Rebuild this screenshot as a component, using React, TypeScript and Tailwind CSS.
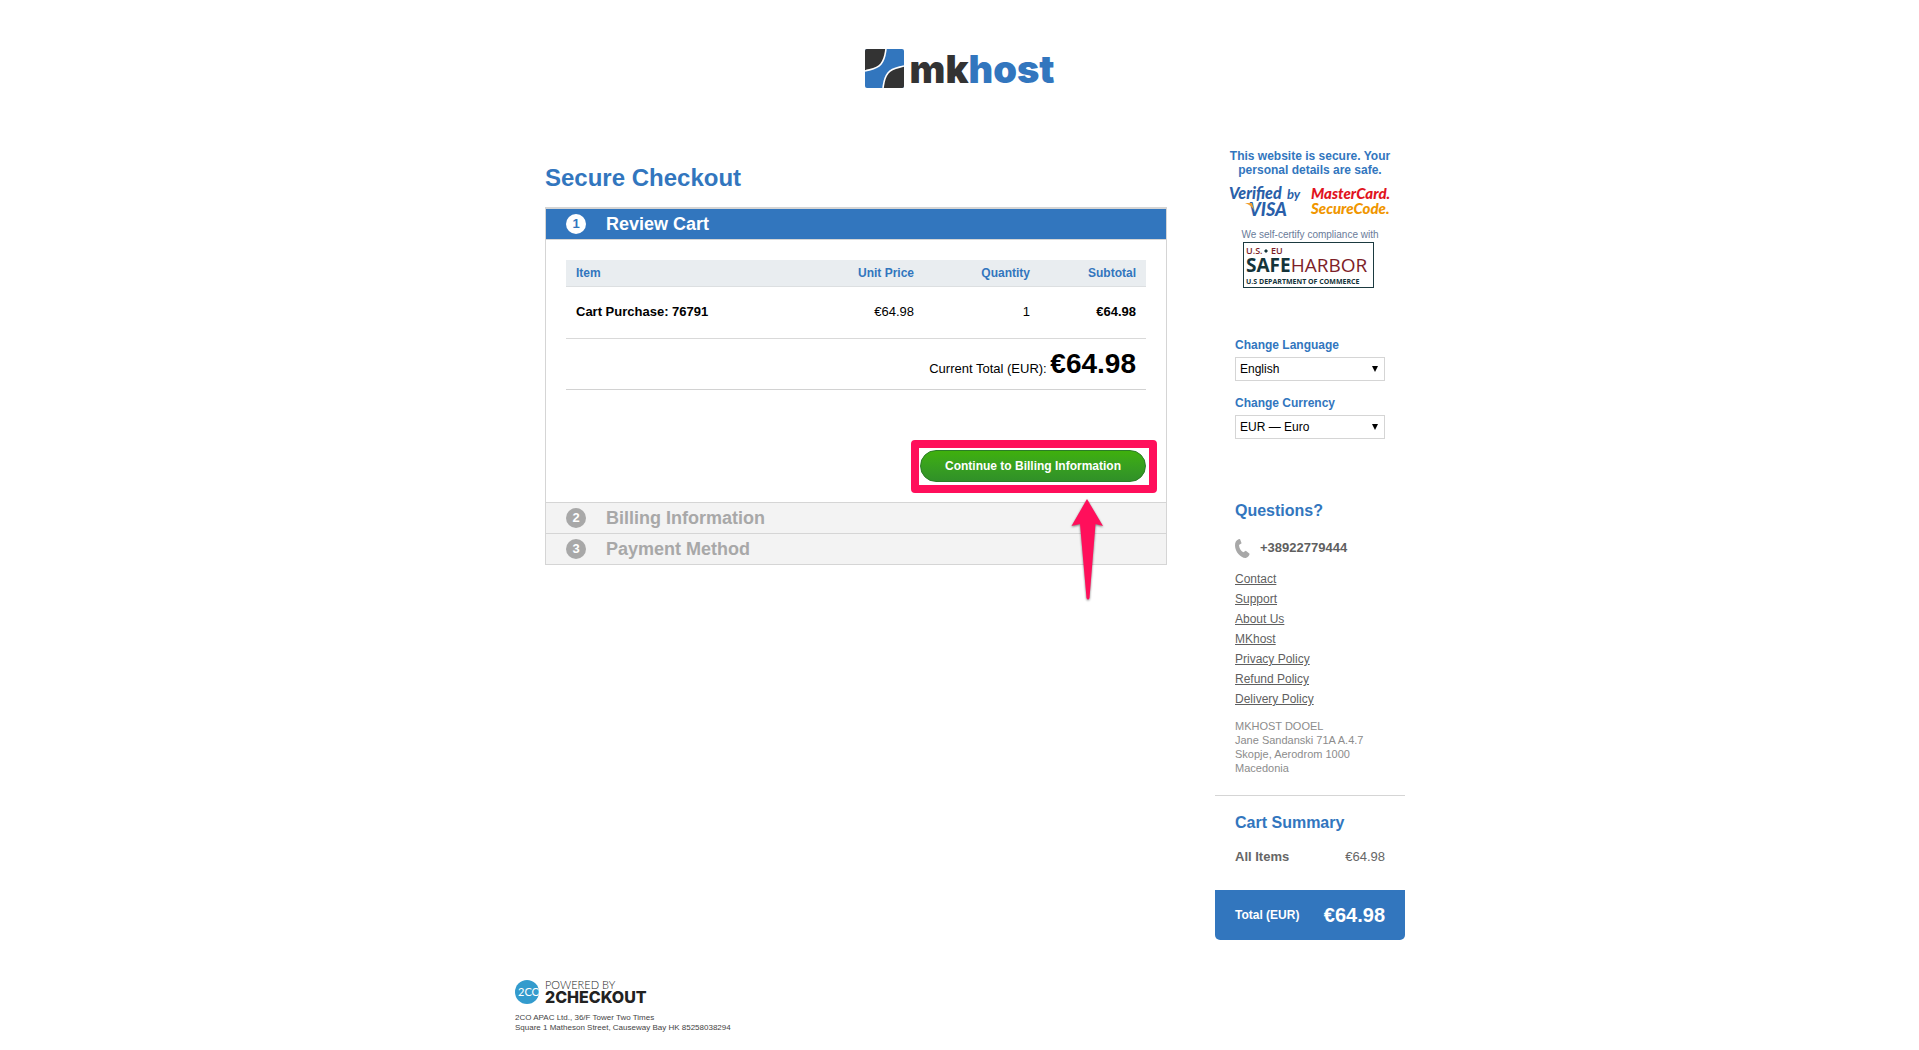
import React, { useState } from 'react';

interface CartItem {
  name: string;
  price: string;
  quantity: number;
}

const items: CartItem[] = [{ name: 'Cart Purchase: 76791', price: '€64.98', quantity: 1 }];

const total = '€64.98';

const links = ['Contact', 'Support', 'About Us', 'MKhost', 'Privacy Policy', 'Refund Policy', 'Delivery Policy'];

const Logo: React.FC = () => (
  <a href="#" className="flex items-center gap-[6px]">
    <svg width="39" height="39" viewBox="0 0 39 39" aria-hidden="true">
      <rect width="39" height="39" rx="2" fill="#3276be" />
      <path d="M2 0H21C20 6 20 10 16 15C12 20 7 20 0 22V2Q0 0 2 0Z" fill="#333" />
      <path d="M39 17V37Q39 39 37 39H18C19 33 19 29 23 24C27 19 32 19 39 17Z" fill="#333" />
      <path d="M21 0C20 6 20 10 16 15C12 20 7 20 0 22" fill="none" stroke="#fff" strokeWidth="1.600" />
      <path d="M18 39C19 33 19 29 23 24C27 19 32 19 39 17" fill="none" stroke="#fff" strokeWidth="1.600" />
    </svg>
    <span className="font-['Inter',sans-serif] text-[38px] leading-9 font-black text-[#333]">
      mk<span className="text-[#3276be]">host</span>
    </span>
  </a>
);

const StepHeader: React.FC<{ step: number; title: string; active?: boolean }> = ({ step, title, active }) => (
  <h2
    className={`flex h-[30px] items-center gap-5 pl-5 text-lg leading-5 font-bold ${
      active ? 'bg-[#3276be] text-white' : 'bg-[#f3f3f3] text-[#a8a8a8]'
    }`}
  >
    <span
      className={`flex size-5 items-center justify-center rounded-full text-[13px] ${
        active ? 'bg-white text-[#3276be]' : 'bg-[#a8a8a8] text-white'
      }`}
    >
      {step}
    </span>
    {title}
  </h2>
);

const CartTable: React.FC = () => (
  <table className="w-full text-[13px] leading-4">
    <thead>
      <tr className="h-[26px] border-b border-[#dcdfe1] bg-[#e9edf0] text-xs text-[#3276be]">
        <th className="pl-[10px] text-left">Item</th>
        <th className="w-[120px] text-right">Unit Price</th>
        <th className="w-[116px] text-right">Quantity</th>
        <th className="w-[116px] pr-[10px] text-right">Subtotal</th>
      </tr>
    </thead>
    <tbody>
      {items.map((item) => (
        <tr key={item.name} className="h-[52px] border-b border-[#d9d9d9]">
          <td className="pl-[10px] font-bold">{item.name}</td>
          <td className="text-right">{item.price}</td>
          <td className="text-right">{item.quantity}</td>
          <td className="pr-[10px] text-right font-bold">{item.price}</td>
        </tr>
      ))}
    </tbody>
    <tfoot>
      <tr className="h-[51px] border-b border-[#d2d2d2]">
        <td colSpan={4} className="pr-[10px] text-right">
          Current Total (EUR): <strong className="text-[28px] leading-8">{total}</strong>
        </td>
      </tr>
    </tfoot>
  </table>
);

const Highlight: React.FC = () => (
  <>
    <span className="pointer-events-none absolute -top-[10px] -right-[11px] -bottom-[11px] -left-[9px] rounded-[4px] border-8 border-[#ff0f5b]" />
    <svg
      className="pointer-events-none absolute top-[49px] right-[42px] z-10 drop-shadow-[0_1px_1px_rgba(0,0,0,0.5)]"
      width="33"
      height="102"
      viewBox="0 0 33 102"
      aria-hidden="true"
    >
      <path d="M16 0L32 27L24.500 25L18.500 99Q17 102 15.500 99L9 25L0.500 27Z" fill="#ff0f5b" />
    </svg>
  </>
);

const SelectBox: React.FC<{ id: string; label: string; options: string[] }> = ({ id, label, options }) => {
  const [value, setValue] = useState<string>(options[0]);

  return (
    <div>
      <label htmlFor={id} className="block text-xs leading-[14px] font-bold text-[#3276be]">
        {label}
      </label>
      <div className="relative mt-[5px]">
        <select
          id={id}
          value={value}
          onChange={(e) => setValue(e.target.value)}
          className="block h-6 w-full appearance-none border border-[#d5d5d5] bg-white pl-1 text-[12px] leading-4 text-black"
        >
          {options.map((option) => (
            <option key={option}>{option}</option>
          ))}
        </select>
        <svg className="pointer-events-none absolute top-[9px] right-[7px]" width="6" height="6" viewBox="0 0 6 6" aria-hidden="true">
          <path d="M0 0H6L3 6Z" />
        </svg>
      </div>
    </div>
  );
};

const SecurityBadges: React.FC = () => (
  <div className="flex flex-col items-center text-center">
    <p className="text-xs leading-[14px] font-bold text-[#3276be]">
      This website is secure. Your
      <br />
      personal details are safe.
    </p>
    <div className="mt-[9px] flex gap-[7px]">
      <svg width="75" height="33" viewBox="0 0 75 33" className="overflow-visible font-['Lato',sans-serif] italic" fill="#2a5fa9">
        <text x="0" y="13" fontSize="16" fontWeight="900">Verified</text>
        <text x="58" y="13" fontSize="13" fontWeight="700">by</text>
        <text x="20" y="30" fontSize="18" fontWeight="900">VISA</text>
        <path d="M16 17H23L25 24Q22 19 16 17Z" fill="#f0a030" />
      </svg>
      <svg width="80" height="33" viewBox="0 0 80 33" className="overflow-visible font-['Lato',sans-serif] italic">
        <text x="0" y="13" fontSize="15" fontWeight="900" fill="#e1141e">MasterCard.</text>
        <text x="0" y="28" fontSize="15" fontWeight="900" fill="#f09600">SecureCode.</text>
      </svg>
    </div>
    <p className="mt-[10px] text-[10px] leading-3 text-[#6a7b99]">We self-certify compliance with</p>
    <svg width="135" height="46" viewBox="0 0 135 46" className="mt-px font-['Open_Sans',sans-serif]">
      <rect x="0.500" y="0.500" width="130" height="45" fill="#fff" stroke="#1b3a40" />
      <text x="3" y="12" fontSize="9" fontWeight="600" fill="#7d1e28">U.S.</text>
      <path d="M23 7L25 9L23 11L21 9Z" fill="#14343a" />
      <text x="28" y="12" fontSize="9" fontWeight="600" fill="#7d1e28">EU</text>
      <text x="3" y="30" fontSize="19" fontWeight="700" fill="#14343a">
        SAFE<tspan fontWeight="400" fill="#7d1e28">HARBOR</tspan>
      </text>
      <text x="3" y="42" fontSize="7" fontWeight="700" fill="#14343a">U.S DEPARTMENT OF COMMERCE</text>
    </svg>
  </div>
);

const Sidebar: React.FC = () => (
  <aside className="w-[190px] shrink-0">
    <SecurityBadges />

    <form className="mt-[50px] flex flex-col gap-[15px] px-5">
      <SelectBox id="language" label="Change Language" options={['English', 'Deutsch', 'Français']} />
      <SelectBox id="currency" label="Change Currency" options={['EUR — Euro', 'USD — U.S. Dollar']} />
    </form>

    <section className="mt-[63px] border-b border-[#d5d5d5] px-5 pb-5 text-[#5f5f5f]">
      <h3 className="text-base leading-[18px] font-bold text-[#3276be]">Questions?</h3>
      <p className="mt-[19px] flex h-[19px] gap-[10px] text-[13px] leading-[18px] font-bold">
        <svg width="15" height="19" viewBox="0 0 15 19" fill="#a8a8a8" aria-hidden="true">
          <path d="M3.500 0.300L5 0L6.600 4.200L4 5.900C4.200 9 5.600 11.500 8.300 13.300L10.800 11.700L14.600 14.800C14.500 16.500 13 18.600 10.800 19C6 19.200 0 13 0 6.500C0 3.300 1.200 1.200 3.500 0.300Z" />
        </svg>
        +38922779444
      </p>
      <ul className="mt-[11px] text-xs leading-5">
        {links.map((link) => (
          <li key={link}>
            <a href="#" className="underline">
              {link}
            </a>
          </li>
        ))}
      </ul>
      <address className="mt-[10px] text-[11px] leading-[14px] text-[#8c8c8c] not-italic">
        MKHOST DOOEL
        <br />
        Jane Sandanski 71A A.4.7
        <br />
        Skopje, Aerodrom 1000
        <br />
        Macedonia
      </address>
    </section>

    <section>
      <h3 className="mt-[18px] px-5 text-base leading-[18px] font-bold text-[#3276be]">Cart Summary</h3>
      <p className="mt-[17px] flex justify-between px-5 text-[13px] leading-4 text-[#666]">
        <strong>All Items</strong>
        <span>{total}</span>
      </p>
      <p className="mt-[25px] flex h-[50px] items-center justify-between rounded-b-[5px] bg-[#3276be] px-5 font-bold text-white">
        <span className="text-xs">Total (EUR)</span>
        <span className="text-xl">{total}</span>
      </p>
    </section>
  </aside>
);

const Footer: React.FC = () => (
  <footer className="mt-10 pl-px">
    <div className="flex items-center gap-[6px] font-['Lato',sans-serif]">
      <span className="flex size-6 items-center overflow-hidden rounded-full bg-[#339bcd] pl-[3px] text-[11px] leading-6 whitespace-nowrap text-white">
        2CO
      </span>
      <span className="text-[#222]">
        <span className="block text-[11px] leading-[10px] font-light">POWERED BY</span>
        <span className="block font-['Inter',sans-serif] text-[16px] leading-[14px] font-extrabold">2CHECKOUT</span>
      </span>
    </div>
    <p className="mt-[9px] text-[8px] leading-[10px] text-[#444]">
      2CO APAC Ltd., 36/F Tower Two Times
      <br />
      Square 1 Matheson Street, Causeway Bay HK 85258038294
    </p>
  </footer>
);

const App: React.FC = () => {
  return (
    <div className="min-h-screen bg-white font-['Liberation_Sans',Arial,sans-serif] text-black">
      <header className="flex justify-center pt-[49px]">
        <Logo />
      </header>

      <div className="mx-auto mt-[61px] max-w-[891px]">
        <div className="flex items-start gap-12 pl-[31px]">
          <main className="flex-1 pt-[15px]">
            <h1 className="text-2xl leading-7 font-bold text-[#3276be]">Secure Checkout</h1>
            <div className="mt-[15px] border border-t-2 border-[#d5d5d5]">
              <StepHeader step={1} title="Review Cart" active />
              <div className="border-y border-[#d5d5d5] p-5">
                <CartTable />
                <div className="mt-[60px] flex justify-end">
                  <div className="relative">
                    <button
                      type="button"
                      className="block h-8 rounded-full border border-[#2b7d26] bg-linear-to-b from-[#3fb00b] to-[#309028] px-6 text-xs font-bold text-white"
                    >
                      Continue to Billing Information
                    </button>
                    <Highlight />
                  </div>
                </div>
              </div>
              <StepHeader step={2} title="Billing Information" />
              <div className="border-t border-[#d5d5d5]">
                <StepHeader step={3} title="Payment Method" />
              </div>
            </div>
          </main>
          <Sidebar />
        </div>
        <Footer />
      </div>
    </div>
  );
};

export default App;
